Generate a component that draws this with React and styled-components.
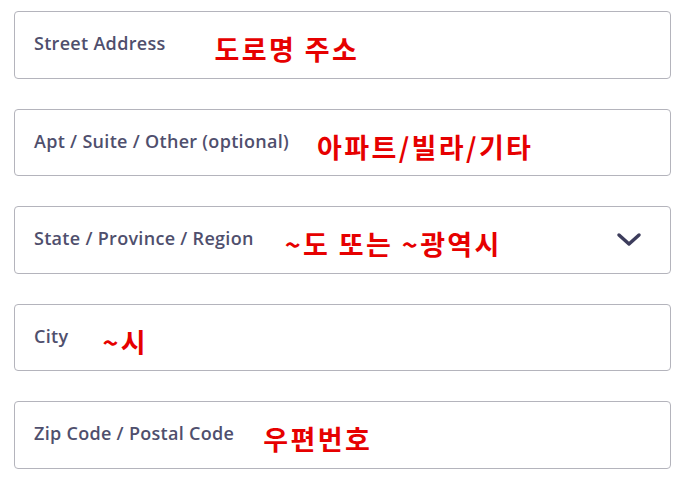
import React from "react";
import styled, { createGlobalStyle } from "styled-components";

const Global = createGlobalStyle`
  html, body { margin: 0; padding: 0; background: #ffffff; }
  body { font-family: "Open Sans", "Noto Sans CJK KR", sans-serif; }
`;

const Form = styled.div`
  display: flex;
  flex-direction: column;
  gap: 30px;
  padding: 11px 11px 0 14px;
  width: 657px;
`;

const Field = styled.div`
  height: 65.5px;
  border: 1px solid #b4b4bc;
  border-radius: 4px;
  display: flex;
  align-items: center;
  padding: 0 28px 0 19px;
  box-sizing: content-box;
  width: 608px;
`;

const Label = styled.span`
  font-family: "Open Sans", sans-serif;
  font-weight: 600;
  font-size: 18px;
  letter-spacing: 0.3px;
  color: #4f4f6d;
  margin-top: -3px;
  white-space: nowrap;
`;

const Note = styled.span`
  font-family: "Noto Sans CJK KR", sans-serif;
  font-weight: 700;
  font-size: 27px;
  letter-spacing: 2.4px;
  color: #e60000;
  margin-left: ${(p) => p.$gap}px;
  margin-top: 8px;
  white-space: nowrap;
`;

const Chevron = styled.svg`
  margin-left: auto;
  width: 26px;
  height: 16px;
`;

const fields = [
  { label: "Street Address", note: "도로명 주소", gap: 49 },
  { label: "Apt / Suite / Other (optional)", note: "아파트/빌라/기타", gap: 28 },
  { label: "State / Province / Region", note: "~도 또는 ~광역시", gap: 31, select: true },
  { label: "City", note: "~시", gap: 34 },
  { label: "Zip Code / Postal Code", note: "우편번호", gap: 29 },
];

export default function App() {
  return (
    <>
      <Global />
      <Form>
        {fields.map((f) => (
          <Field key={f.label}>
            <Label>{f.label}</Label>
            <Note $gap={f.gap}>{f.note}</Note>
            {f.select && (
              <Chevron viewBox="0 0 26 16">
                <path d="M3 3 L13 12 L23 3" fill="none" stroke="#3d3d5c" strokeWidth="3.5" strokeLinecap="round" strokeLinejoin="round" />
              </Chevron>
            )}
          </Field>
        ))}
      </Form>
    </>
  );
}
